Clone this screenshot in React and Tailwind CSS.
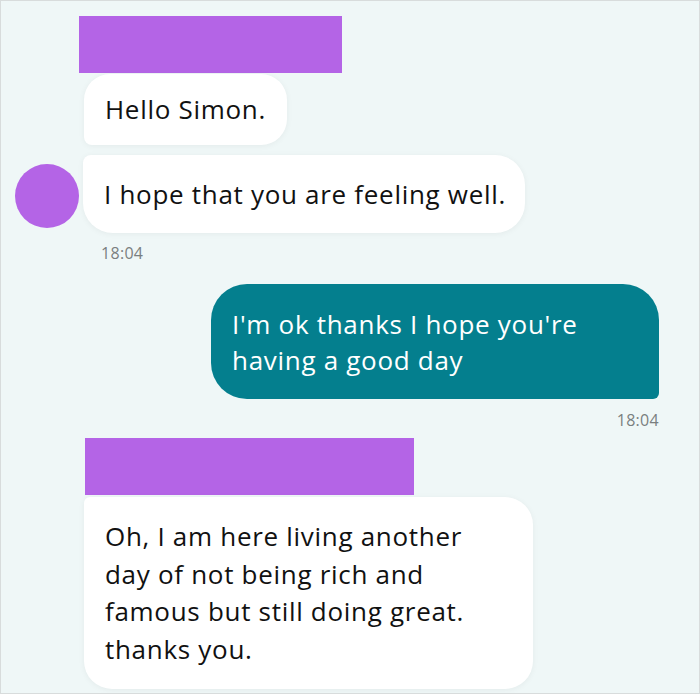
import React from 'react';

const font = { fontFamily: '"Open Sans", "Noto Sans", sans-serif' };

function Redacted({ className }) {
  return <div className={`bg-[#b464e6] h-[57px] ${className}`} />;
}

function Time({ className }) {
  return <div className={`text-[16px] leading-[18px] tracking-[0.3px] text-[#7a7f80] ${className}`}>18:04</div>;
}

export default function App() {
  return (
    <div
      style={font}
      className="w-[700px] h-[694px] overflow-hidden bg-[#eff7f7] border border-[#d8dcdc] text-[#111] text-[26px] tracking-[0.7px] leading-[37px]"
    >
      <div className="pt-[15px] pl-[78px]">
        <Redacted className="w-[263px]" />
      </div>

      <div className="pl-[83px] mt-[1px]">
        <div className="inline-block bg-white rounded-[26px] rounded-bl-[8px] px-[21px] py-[17px] shadow-[0_1px_6px_rgba(0,0,0,0.05)]">
          Hello Simon.
        </div>
      </div>

      <div className="flex items-end gap-[4px] pl-[14px] mt-[10px]">
        <div className="w-[64px] h-[64px] rounded-full bg-[#b464e6] mb-[5px] shrink-0" />
        <div className="w-[442px] whitespace-nowrap bg-white rounded-[30px] rounded-tl-[8px] px-[21px] py-[20px] leading-[38px] shadow-[0_1px_6px_rgba(0,0,0,0.05)]">
          I hope that you are feeling well.
        </div>
      </div>

      <Time className="pl-[100px] mt-[11px]" />

      <div className="flex justify-end pr-[40px] mt-[22px]">
        <div className="w-[448px] whitespace-nowrap bg-[#047f8e] text-white rounded-[36px] rounded-br-[6px] px-[21px] pt-[22px] pb-[21px] leading-[36px]">
          I'm ok thanks I hope you're
          <br />
          having a good day
        </div>
      </div>

      <Time className="text-right pr-[40px] mt-[12px]" />

      <div className="pl-[84px] mt-[9px]">
        <Redacted className="w-[329px]" />
      </div>

      <div className="pl-[83px] mt-[2px]">
        <div className="w-[449px] whitespace-nowrap bg-white rounded-[28px] rounded-tl-[6px] px-[21px] py-[21px] leading-[37.5px] shadow-[0_1px_6px_rgba(0,0,0,0.05)]">
          Oh, I am here living another
          <br />
          day of not being rich and
          <br />
          famous but still doing great.
          <br />
          thanks you.
        </div>
      </div>
    </div>
  );
}
